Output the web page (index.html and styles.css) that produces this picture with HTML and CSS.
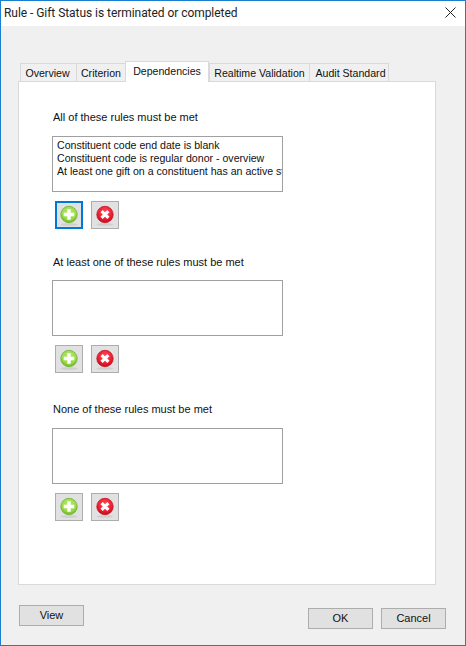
FILE: index.html
```html
<!DOCTYPE html>
<html lang="en">
<head>
  <meta charset="UTF-8" />
  <meta name="viewport" content="width=device-width, initial-scale=1.0"/>
  <title>Rule - Gift Status is terminated or completed</title>
  <link rel="stylesheet" href="styles.css">
</head>
<body>

  <svg class="defs" width="0" height="0" aria-hidden="true">
    <defs>
      <radialGradient id="greenBall" cx="50%" cy="35%" r="65%">
        <stop offset="0" stop-color="#b4e86a"/>
        <stop offset="0.65" stop-color="#9cdc4c"/>
        <stop offset="1" stop-color="#6fb52a"/>
      </radialGradient>
      <radialGradient id="redBall" cx="50%" cy="35%" r="65%">
        <stop offset="0" stop-color="#ff4a55"/>
        <stop offset="0.65" stop-color="#f01e30"/>
        <stop offset="1" stop-color="#b80f1e"/>
      </radialGradient>
      <symbol id="iconAdd" viewBox="0 0 20 22">
        <ellipse cx="10" cy="19.4" rx="8.5" ry="1.4" fill="#000" opacity="0.08"/>
        <circle cx="10" cy="9.5" r="8.2" fill="url(#greenBall)" stroke="#74b032" stroke-width="0.8"/>
        <path d="M10 4.2v10.6M4.7 9.5h10.6" stroke="#fff" stroke-width="3.4"/>
      </symbol>
      <symbol id="iconRemove" viewBox="0 0 20 22">
        <ellipse cx="10" cy="19.4" rx="8.5" ry="1.4" fill="#000" opacity="0.08"/>
        <circle cx="10" cy="9.5" r="8.2" fill="url(#redBall)" stroke="#c01524" stroke-width="0.8"/>
        <path d="M6.6 6.1l6.8 6.8M13.4 6.1l-6.8 6.8" stroke="#fff" stroke-width="3.2"/>
      </symbol>
    </defs>
  </svg>

  <div class="window">
    <div class="titlebar">
      <span class="title">Rule - Gift Status is terminated or completed</span>
      <svg class="close" width="11" height="11" viewBox="0 0 11 11">
        <path d="M0.5 0.5l10 10M10.5 0.5l-10 10" stroke="#222" stroke-width="1" fill="none"/>
      </svg>
    </div>

    <div class="content">
      <div class="tabs">
        <div class="tab tab-overview">Overview</div>
        <div class="tab tab-criterion">Criterion</div>
        <div class="tab tab-dependencies active">Dependencies</div>
        <div class="tab tab-realtime">Realtime Validation</div>
        <div class="tab tab-audit">Audit Standard</div>
      </div>

      <div class="panel">
        <section class="group group-all">
          <div class="group-label">All of these rules must be met</div>
          <div class="listbox">
            <div>Constituent code end date is blank</div>
            <div>Constituent code is regular donor - overview</div>
            <div>At least one gift on a constituent has an active status</div>
          </div>
          <div class="actions">
            <button class="icon-btn focused"><svg width="20" height="22"><use href="#iconAdd"/></svg></button>
            <button class="icon-btn"><svg width="20" height="22"><use href="#iconRemove"/></svg></button>
          </div>
        </section>

        <section class="group group-one">
          <div class="group-label">At least one of these rules must be met</div>
          <div class="listbox"></div>
          <div class="actions">
            <button class="icon-btn"><svg width="20" height="22"><use href="#iconAdd"/></svg></button>
            <button class="icon-btn"><svg width="20" height="22"><use href="#iconRemove"/></svg></button>
          </div>
        </section>

        <section class="group group-none">
          <div class="group-label">None of these rules must be met</div>
          <div class="listbox"></div>
          <div class="actions">
            <button class="icon-btn"><svg width="20" height="22"><use href="#iconAdd"/></svg></button>
            <button class="icon-btn"><svg width="20" height="22"><use href="#iconRemove"/></svg></button>
          </div>
        </section>
      </div>

      <div class="footer">
        <button class="btn">View</button>
        <div class="footer-right">
          <button class="btn btn-ok">OK</button>
          <button class="btn">Cancel</button>
        </div>
      </div>
    </div>
  </div>

</body>
</html>
```

FILE: styles.css
```css
html, body {
  margin: 0;
  padding: 0;
}

body {
  width: 466px;
  height: 646px;
  overflow: hidden;
  font-family: "Liberation Sans", Arial, sans-serif;
  font-size: 11px;
  color: #111;
}

.defs {
  display: block;
  height: 0;
}

.window {
  width: 466px;
  height: 646px;
  box-sizing: border-box;
  border: 1px solid #1a7fd0;
  background: #f0f0f0;
  display: flex;
  flex-direction: column;
}

.titlebar {
  height: 25px;
  background: #fff;
  display: flex;
  align-items: center;
  justify-content: space-between;
  padding: 0 9px 0 3px;
  flex-shrink: 0;
}

.title {
  font-family: Roboto, "Liberation Sans", sans-serif;
  font-size: 12px;
  letter-spacing: -0.05px;
  color: #222;
  position: relative;
  top: -1px;
}

.close {
  display: block;
  position: relative;
  top: -1px;
}

.content {
  flex: 1;
  padding: 35px 19px 0 17px;
  display: flex;
  flex-direction: column;
}

.tabs {
  display: flex;
  align-items: flex-end;
  height: 20px;
  padding-left: 2px;
  position: relative;
  z-index: 1;
}

.tab {
  height: 18px;
  box-sizing: border-box;
  border: 1px solid #d9d9d9;
  border-bottom: none;
  border-right: none;
  background: #f0f0f0;
  font-size: 10.6px;
  line-height: 18px;
  text-align: center;
  white-space: nowrap;
  color: #111;
}

.tab-overview { width: 56px; padding-right: 2px; }
.tab-criterion { width: 49px; }
.tab-dependencies { width: 84px; }
.tab-realtime { width: 100px; }
.tab-audit { width: 80px; padding-left: 3px; border-right: 1px solid #d9d9d9; }

.tab.active {
  height: 21px;
  margin-bottom: -1px;
  background: #fff;
  border-right: 1px solid #d9d9d9;
  line-height: 18px;
}

.panel {
  width: 418px;
  height: 504px;
  box-sizing: border-box;
  border: 1px solid #d9d9d9;
  background: #fff;
  padding-left: 33px;
}

.group-label {
  font-size: 11px;
  line-height: 14px;
  color: #111;
  margin-bottom: 12px;
  padding-left: 1px;
}

.group-all { padding-top: 28px; }
.group-one { margin-top: 26px; }
.group-none { margin-top: 29px; }

.group-one .group-label { margin-bottom: 11px; }
.group-none .group-label { margin-bottom: 12px; }

.listbox {
  width: 231px;
  height: 56px;
  box-sizing: border-box;
  border: 1px solid #a0a0a0;
  background: #fff;
  padding: 2px 0 0 4px;
  font-size: 10.6px;
  line-height: 13px;
  white-space: nowrap;
  overflow: hidden;
  color: #111;
}

.actions {
  display: flex;
  gap: 8px;
  margin: 9px 0 0 3px;
}

.icon-btn {
  width: 28px;
  height: 28px;
  box-sizing: border-box;
  padding: 0;
  border: 1px solid #adadad;
  background: #e1e1e1;
  display: flex;
  align-items: center;
  justify-content: center;
}

.icon-btn svg {
  display: block;
  margin-top: 2px;
}

.icon-btn.focused {
  border: 2px solid #0078d7;
}

.footer {
  display: flex;
  justify-content: space-between;
  align-items: flex-start;
  margin-top: 20px;
  padding-left: 1px;
}

.footer-right {
  display: flex;
  gap: 8px;
  margin-top: 3px;
}

.btn {
  width: 65px;
  height: 21px;
  box-sizing: border-box;
  padding: 0;
  border: 1px solid #adadad;
  background: #e1e1e1;
  font-family: inherit;
  font-size: 11px;
  line-height: 17px;
  color: #111;
}
```
